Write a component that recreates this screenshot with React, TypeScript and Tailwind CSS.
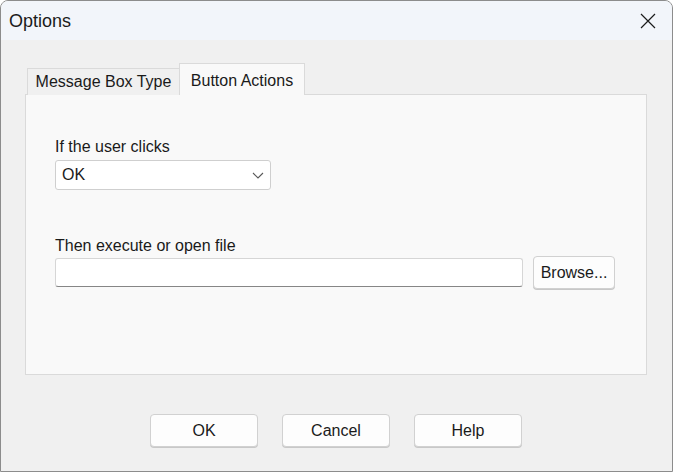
import React from 'react'

const font = { fontFamily: '"Liberation Sans", Arial, sans-serif' }

function DialogButton({ label, className = '' }: { label: string; className?: string }) {
  return (
    <button
      className={`h-[33px] rounded-[4px] border border-[#d1d1d1] bg-[#fdfdfd] text-[16px] text-[#1a1a1a] shadow-[0_1px_0_#c8c8c8] ${className}`}
    >
      {label}
    </button>
  )
}

export default function App() {
  return (
    <div
      className="w-[673px] h-[472px] flex flex-col overflow-hidden rounded-t-[8px] border border-[#8c8c8c] bg-[#f0f0f0]"
      style={font}
    >
      {/* title bar */}
      <div className="h-[39px] shrink-0 flex items-center justify-between bg-[#f2f5fa] pl-[8px] pr-[16px]">
        <span className="text-[18px] text-[#1b1b1b] pt-[1px]">Options</span>
        <svg width="16" height="16" viewBox="0 0 16 16" className="mt-[1px]">
          <path d="M1 1L15 15M15 1L1 15" stroke="#1b1b1b" strokeWidth="1.2" />
        </svg>
      </div>

      <div className="flex-1 flex flex-col px-[24px] pt-[23px]">
        {/* tabs */}
        <div className="flex items-end h-[31px] pl-[2px] relative z-10">
          <div className="h-[27px] w-[153px] border border-b-0 border-[#dadada] bg-[#f0f0f0] flex items-center justify-center text-[16px] text-[#1a1a1a] mb-[-1px]">
            Message Box Type
          </div>
          <div className="h-[32px] w-[126px] -ml-[1px] border border-b-0 border-[#dadada] bg-[#f9f9f9] flex items-start justify-center pt-[5px] text-[16px] text-[#1a1a1a] mb-[-1px]">
            Button Actions
          </div>
        </div>

        {/* panel */}
        <div className="h-[281px] w-[622px] border border-[#dadada] bg-[#f9f9f9] pl-[29px] pt-[43px] flex flex-col">
          <span className="text-[16px] text-[#1a1a1a] leading-[18px]">If the user clicks</span>
          <div className="mt-[4px] h-[30px] w-[216px] rounded-[3px] border border-[#cfcfcf] bg-white flex items-center justify-between pl-[6px] pr-[5px]">
            <span className="text-[16px] text-[#1a1a1a]">OK</span>
            <svg width="14" height="10" viewBox="0 0 14 10">
              <path d="M2 3L7 8L12 3" fill="none" stroke="#5a5a5a" strokeWidth="1.1" />
            </svg>
          </div>

          <span className="mt-[47px] text-[16px] text-[#1a1a1a] leading-[18px]">Then execute or open file</span>
          <div className="mt-[1px] flex items-center">
            <div className="h-[29px] w-[468px] rounded-[3px] border border-[#d6d6d6] border-b-[#868686] bg-white" />
            <DialogButton label="Browse..." className="ml-[10px] w-[82px]" />
          </div>
        </div>

        {/* bottom buttons */}
        <div className="mt-[39px] flex justify-center gap-[24px] pr-[1px]">
          <DialogButton label="OK" className="w-[108px]" />
          <DialogButton label="Cancel" className="w-[108px]" />
          <DialogButton label="Help" className="w-[108px]" />
        </div>
      </div>
    </div>
  )
}
